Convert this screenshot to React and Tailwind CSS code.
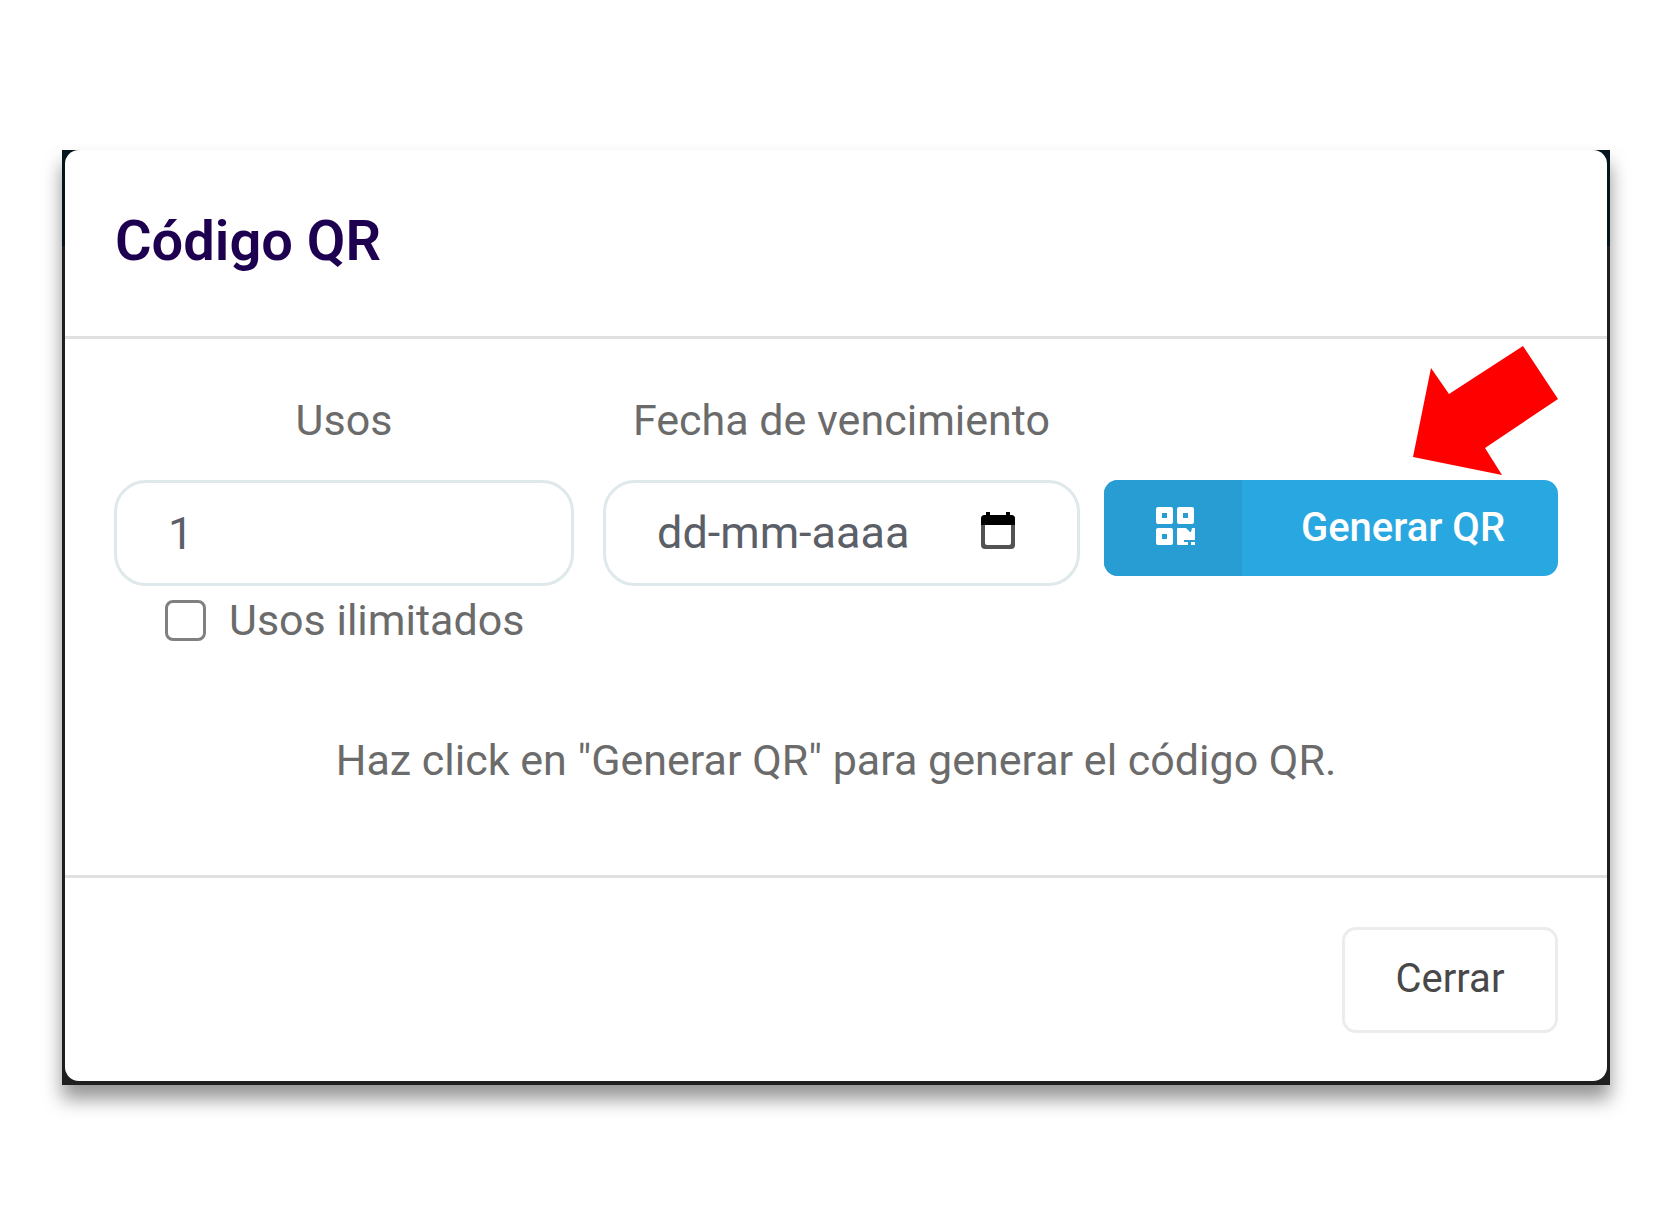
import { useState } from "react";

function QrIcon() {
  return (
    <svg viewBox="0 0 39 38" className="h-[38px] w-[39px]" fill="currentColor" fillRule="evenodd" aria-hidden="true">
      <path d="M2 0h13a2 2 0 0 1 2 2v13a2 2 0 0 1-2 2H2a2 2 0 0 1-2-2V2a2 2 0 0 1 2-2zM6 6v5h5V6z" />
      <path d="M23 0h13a2 2 0 0 1 2 2v13a2 2 0 0 1-2 2H23a2 2 0 0 1-2-2V2a2 2 0 0 1 2-2zM27 6v5h5V6z" />
      <path d="M2 21h13a2 2 0 0 1 2 2v13a2 2 0 0 1-2 2H2a2 2 0 0 1-2-2V23a2 2 0 0 1 2-2zM6 27v5h5v-5z" />
      <path d="M22 21h8l4 4h1l1-4h3v12H28v5h-6a1 1 0 0 1-1-1V22a1 1 0 0 1 1-1z" />
      <path d="M28 35h4v3h-4zM35 35h4v3h-4z" />
    </svg>
  );
}

function CalendarIcon() {
  return (
    <svg viewBox="0 0 36 38" className="h-[38px] w-9" aria-hidden="true">
      <path d="M5 3h26a4 4 0 0 1 4 4v26a4 4 0 0 1-4 4H5a4 4 0 0 1-4-4V7a4 4 0 0 1 4-4zM5 12v19a2 2 0 0 0 2 2h22a2 2 0 0 0 2-2V12z" fillRule="evenodd" fill="#000" fillOpacity="0.68" />
      <path d="M6 0h4v3h16V0h4v3h1a4 4 0 0 1 4 4v6H1V7a4 4 0 0 1 4-4h1z" fill="#000" />
    </svg>
  );
}

export default function App() {
  const [uses, setUses] = useState("1");
  const [date, setDate] = useState("");

  return (
    <main className="min-h-screen bg-white pt-[150px] pr-11 pb-32 pl-[62px] font-[Roboto,sans-serif] text-[43px] leading-[48px] text-[#6b6b6b]">
      <div className="bg-[linear-gradient(#04151d_96px,#1f1f1f_96px)] px-[3px] pb-1 shadow-[0_14px_18px_rgba(0,0,0,0.42)]">
        <section role="dialog" aria-labelledby="title" className="rounded-[14px] bg-white">
          <header className="border-b-[3px] border-[#e1e1e1] px-[50px] pt-[61px] pb-[65px]">
            <h1 id="title" className="text-[56px] leading-[60px] font-semibold text-[#1e0050]">Código QR</h1>
          </header>

          <div className="px-[49px] pt-[57px] pb-[91px]">
            <div className="grid grid-cols-[465fr_477fr_454fr] gap-x-6">
              <div className="pr-[5px]">
                <label htmlFor="uses" className="mb-9 block text-center">Usos</label>
                <input
                  id="uses"
                  type="text"
                  inputMode="numeric"
                  value={uses}
                  onChange={(e) => setUses(e.target.value)}
                  className="block h-[106px] w-full rounded-[32px] border-[3px] border-[#dfe8eb] bg-white px-[51px] text-[45px] text-[#5b6068]"
                />
                <label className="mt-2.5 flex items-center gap-[23px] pl-[51px] whitespace-nowrap">
                  <input type="checkbox" className="size-[41px] appearance-none rounded-[8px] border-[3px] border-[#808080] bg-white checked:bg-[#29a7e0]" />
                  Usos ilimitados
                </label>
              </div>

              <div>
                <label htmlFor="expiry" className="mb-9 block text-center whitespace-nowrap">Fecha de vencimiento</label>
                <div className="flex h-[106px] items-center rounded-[32px] border-[3px] border-[#dfe8eb] bg-white pr-[61px] pl-[51px]">
                  <input
                    id="expiry"
                    type="text"
                    placeholder="dd-mm-aaaa"
                    value={date}
                    onChange={(e) => setDate(e.target.value)}
                    className="w-full min-w-0 flex-1 bg-transparent text-[45px] text-[#5b6068] placeholder:text-[#5b6068]"
                  />
                  <button type="button" aria-label="Abrir calendario" className="mb-1">
                    <CalendarIcon />
                  </button>
                </div>
              </div>

              <div className="relative pt-[84px]">
                <button type="button" className="flex h-24 w-full overflow-hidden rounded-[14px] bg-[#29a7e0] text-[40px] font-medium whitespace-nowrap text-white">
                  <span className="flex h-full w-[138px] items-center justify-center bg-[#289dd4] pb-1 pl-1">
                    <QrIcon />
                  </span>
                  <span className="flex h-full flex-1 items-center justify-center pl-1.5">Generar QR</span>
                </button>
                <svg viewBox="0 0 145 129" className="pointer-events-none absolute -top-[50px] right-0 h-[129px] w-[145px]" aria-hidden="true">
                  <polygon points="0,111 18,22 36,48 110,0 145,53 72,102 89,129" fill="#ff0000" />
                </svg>
              </div>
            </div>

            <p className="mt-[92px] text-center">Haz click en "Generar QR" para generar el código QR.</p>
          </div>

          <footer className="flex justify-end border-t-[3px] border-[#e1e1e1] px-[49px] pt-[49px] pb-12">
            <button type="button" className="h-[106px] w-[216px] rounded-[14px] border-[3px] border-[#ececec] bg-white pb-0.5 text-[40px] text-[#484848]">Cerrar</button>
          </footer>
        </section>
      </div>
    </main>
  );
}
